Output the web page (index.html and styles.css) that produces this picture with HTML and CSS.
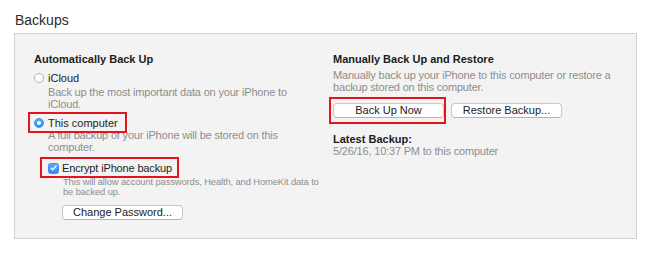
FILE: index.html
```html
<!DOCTYPE html>
<html lang="en">
<head>
<meta charset="utf-8">
<title>Backups</title>
<link rel="stylesheet" href="styles.css">
</head>
<body>
  <h1 class="title">Backups</h1>
  <section class="panel">
    <div class="col">
      <h2 class="heading">Automatically Back Up</h2>
      <div class="option opt-icloud"><span class="radio"></span><span>iCloud</span></div>
      <p class="desc desc-icloud">Back up the most important data on your iPhone to<br>iCloud.</p>
      <div class="option opt-computer annotated ann-computer"><span class="radio checked"></span><span>This computer</span></div>
      <p class="desc">A full backup of your iPhone will be stored on this<br>computer.</p>
      <div class="option opt-encrypt annotated ann-encrypt">
        <span class="checkbox"><svg viewBox="0 0 10 10" width="10" height="10"><path d="M2.3 5.2 L4.2 7.1 L7.8 2.8" fill="none" stroke="#fff" stroke-width="1.5" stroke-linecap="round" stroke-linejoin="round"/></svg></span><span>Encrypt iPhone backup</span>
      </div>
      <p class="small">This will allow account passwords, Health, and HomeKit data to<br>be backed up.</p>
      <button class="btn btn-password">Change Password...</button>
    </div>
    <div class="col">
      <h2 class="heading">Manually Back Up and Restore</h2>
      <p class="desc desc-manual">Manually back up your iPhone to this computer or restore a<br>backup stored on this computer.</p>
      <div class="btn-row">
        <button class="btn btn-main annotated ann-backup">Back Up Now</button>
        <button class="btn btn-main">Restore Backup...</button>
      </div>
      <h2 class="heading latest">Latest Backup:</h2>
      <p class="desc date">5/26/16, 10:37 PM to this computer</p>
    </div>
  </section>
</body>
</html>
```
FILE: styles.css
```css
* { box-sizing: border-box; }

html, body {
  margin: 0;
  padding: 0;
  background: #ffffff;
}

body {
  font-family: "Liberation Sans", Arial, sans-serif;
  color: #1c1c1c;
  width: 650px;
  height: 254px;
  overflow: hidden;
}

.title {
  margin: 12px 0 5px 15px;
  font-size: 14px;
  font-weight: normal;
  line-height: 16px;
  color: #2c2c2c;
}

.panel {
  margin-left: 14px;
  width: 623px;
  height: 206px;
  border: 1px solid #d2d2d2;
  background: #f3f3f3;
  padding: 19px 0 0 19px;
  display: grid;
  grid-template-columns: 299px 1fr;
  align-items: start;
}

.col {
  display: flex;
  flex-direction: column;
  align-items: flex-start;
}

.heading {
  margin: 0;
  font-size: 11px;
  font-weight: bold;
  line-height: 13px;
  color: #1c1c1c;
}

.option {
  display: inline-flex;
  align-items: center;
  gap: 4px;
  font-size: 11px;
  line-height: 12px;
  height: 12px;
  color: #1c1c1c;
}

.opt-icloud { margin-top: 6px; }
.opt-computer { margin-top: 7px; }
.opt-encrypt { margin-top: 9px; margin-left: 14px; gap: 3px; letter-spacing: -0.15px; }

.radio {
  width: 10px;
  height: 10px;
  border-radius: 50%;
  border: 1px solid #b2b2b2;
  background: #ffffff;
  display: inline-flex;
  align-items: center;
  justify-content: center;
  flex: none;
}

.radio.checked {
  border-color: #3a8ff0;
  background: linear-gradient(#5aaafb, #2f8af2);
}

.radio.checked::after {
  content: "";
  width: 4px;
  height: 4px;
  border-radius: 50%;
  background: #ffffff;
}

.checkbox {
  width: 11px;
  height: 11px;
  border-radius: 2.5px;
  background: linear-gradient(#5aaafb, #2f8af2);
  border: 1px solid #3a8ff0;
  display: inline-flex;
  align-items: center;
  justify-content: center;
  flex: none;
}

.checkbox svg { display: block; }

.desc {
  margin: 0;
  padding-left: 14px;
  font-size: 11px;
  line-height: 12px;
  letter-spacing: -0.18px;
  color: #8e8e8e;
}

.desc-icloud { margin-top: 2px; }

.desc-manual {
  padding-left: 0;
  margin-top: 3px;
}

.small {
  margin: 3px 0 0 29px;
  font-size: 9.4px;
  line-height: 10px;
  letter-spacing: -0.12px;
  color: #8e8e8e;
}

.btn {
  font-family: inherit;
  font-size: 11px;
  line-height: 13px;
  height: 15px;
  padding: 0;
  color: #1c1c1c;
  background: #ffffff;
  border: 1px solid #c8c8c8;
  border-bottom-color: #b4b4b4;
  border-radius: 4px;
  text-align: center;
}

.btn-password {
  margin: 8px 0 0 28px;
  width: 121px;
}

.btn-row {
  display: flex;
  gap: 7px;
  margin-top: 10px;
}

.btn-main { width: 111px; }

.latest {
  margin-top: 15px;
  line-height: 12px;
}

.date { padding-left: 0; }

/* red annotation boxes drawn over the screenshot */
.annotated { position: relative; }

.annotated::before {
  content: "";
  position: absolute;
  border: 2px solid #e5141c;
  pointer-events: none;
}

.ann-computer::before { top: -5px; bottom: -4px; left: -6px; right: -9px; }
.ann-encrypt::before { top: -5px; bottom: -4px; left: -8px; right: -7px; }
.ann-backup::before { top: -7px; bottom: -7px; left: -5px; right: -3px; }
```
